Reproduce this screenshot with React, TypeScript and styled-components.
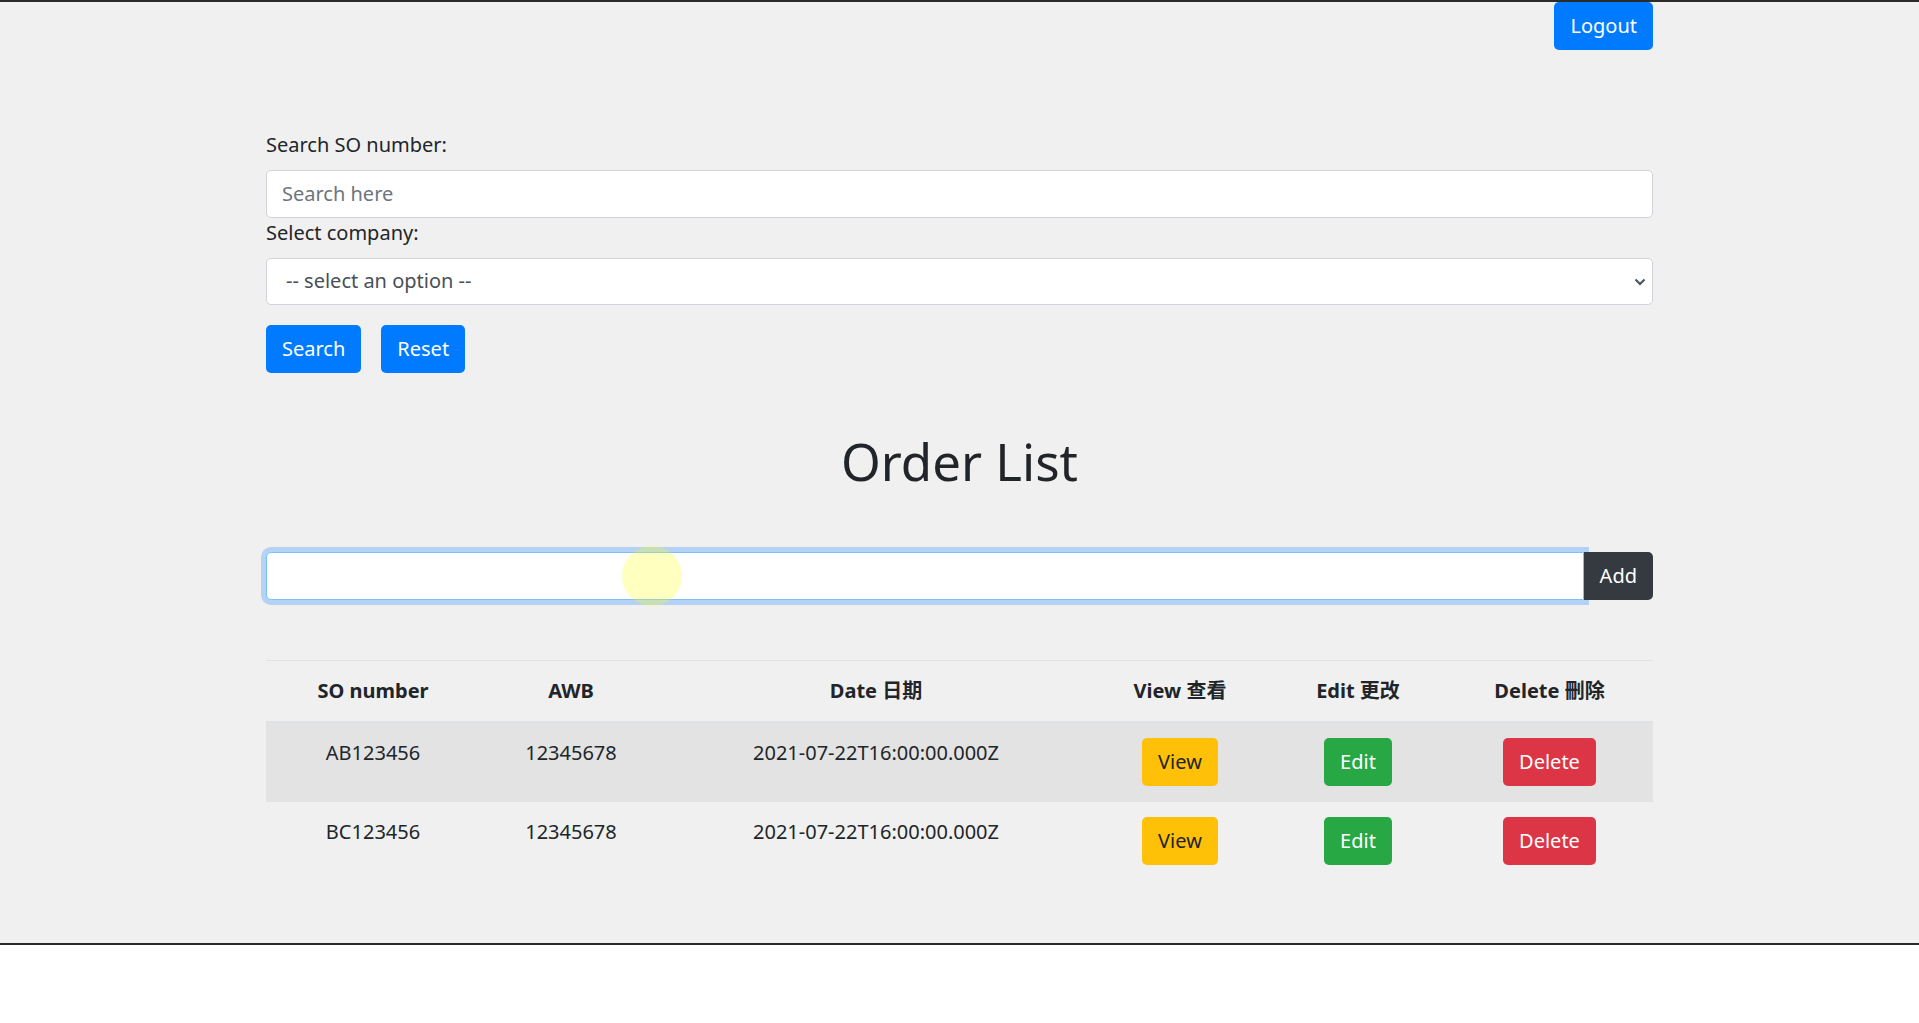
import React from 'react';
import styled, { createGlobalStyle } from 'styled-components';

const GlobalStyle = createGlobalStyle`
  html, body {
    margin: 0;
    padding: 0;
    background: #ffffff;
  }
  body {
    font-family: "Noto Sans", "Noto Sans CJK TC", sans-serif;
    font-size: 20px;
    line-height: 30px;
    color: #212529;
  }
  * {
    box-sizing: border-box;
  }
`;

const Screen = styled.div`
  height: 945px;
  background: #f0f0f0;
  border-top: 2px solid #2b2b2b;
  border-bottom: 2px solid #2b2b2b;
`;

const Container = styled.div`
  width: 1387px;
  margin: 0 auto;
`;

const TopBar = styled.div`
  display: flex;
  justify-content: flex-end;
`;

const Button = styled.button<{ $variant: 'primary' | 'warning' | 'success' | 'danger' | 'dark' }>`
  font-family: inherit;
  font-size: 20px;
  line-height: 30px;
  padding: 8px 15px;
  border: 1px solid transparent;
  border-radius: 5px;
  cursor: pointer;
  color: ${(p) => (p.$variant === 'warning' ? '#212529' : '#ffffff')};
  background: ${(p) =>
    ({
      primary: '#007bff',
      warning: '#ffc107',
      success: '#28a745',
      danger: '#dc3545',
      dark: '#343a40',
    })[p.$variant]};
`;

const Form = styled.form`
  margin-top: 80px;
  display: flex;
  flex-direction: column;
`;

const Label = styled.label`
  display: block;
  margin-bottom: 10px;
`;

const TextInput = styled.input<{ $focused?: boolean }>`
  display: block;
  width: 100%;
  height: 47.5px;
  padding: 7.5px 15px;
  font-family: inherit;
  font-size: 20px;
  line-height: 30px;
  color: #495057;
  background: #ffffff;
  border: 1px solid ${(p) => (p.$focused ? '#80bdff' : '#ced4da')};
  border-radius: 5px;
  box-shadow: ${(p) => (p.$focused ? '0 0 0 5px rgba(0, 123, 255, 0.25)' : 'none')};
  outline: none;
  &::placeholder {
    color: #6c757d;
  }
`;

const SelectWrap = styled.div`
  position: relative;
`;

const Select = styled.select`
  display: block;
  width: 100%;
  height: 47.5px;
  padding: 7.5px 15px 7.5px 19px;
  font-family: inherit;
  font-size: 20px;
  line-height: 30px;
  color: #495057;
  background: #ffffff;
  border: 1px solid #ced4da;
  border-radius: 5px;
  appearance: none;
  outline: none;
`;

const Chevron = styled.svg`
  position: absolute;
  right: 7px;
  top: 20px;
  pointer-events: none;
`;

const ButtonRow = styled.div`
  display: flex;
  gap: 20px;
  margin-top: 20px;
`;

const Title = styled.h1`
  margin: 56px 0 0;
  text-align: center;
  font-size: 51px;
  line-height: 65px;
  font-weight: 400;
  color: #212529;
`;

const InputGroup = styled.div`
  position: relative;
  display: flex;
  margin-top: 58px;
  ${TextInput} {
    flex: 1;
    border-radius: 5px 0 0 5px;
  }
  ${Button} {
    border-radius: 0 5px 5px 0;
  }
`;

const CursorDot = styled.span`
  position: absolute;
  left: 356px;
  top: -6px;
  width: 60px;
  height: 60px;
  border-radius: 50%;
  background: rgba(255, 255, 0, 0.25);
  pointer-events: none;
`;

const Table = styled.table`
  width: 100%;
  margin-top: 60px;
  border-collapse: collapse;
  table-layout: fixed;
`;

const Th = styled.th<{ $w: number }>`
  width: ${(p) => p.$w}px;
  padding: 15px;
  text-align: center;
  vertical-align: bottom;
  font-weight: 700;
  border-top: 1px solid #dee2e6;
  border-bottom: 2px solid #dee2e6;
`;

const Tr = styled.tr<{ $striped: boolean }>`
  background: ${(p) => (p.$striped ? 'rgba(0, 0, 0, 0.05)' : 'transparent')};
`;

const Td = styled.td`
  padding: 15px;
  text-align: center;
  vertical-align: top;
  border-top: 1px solid #dee2e6;
`;

const columns = [
  { label: 'SO number', w: 214 },
  { label: 'AWB', w: 182 },
  { label: 'Date 日期', w: 428 },
  { label: 'View 查看', w: 180 },
  { label: 'Edit 更改', w: 176 },
  { label: 'Delete 刪除', w: 207 },
];

const orders = [
  { so: 'AB123456', awb: '12345678', date: '2021-07-22T16:00:00.000Z' },
  { so: 'BC123456', awb: '12345678', date: '2021-07-22T16:00:00.000Z' },
];

export default function App() {
  return (
    <>
      <GlobalStyle />
      <Screen>
        <Container>
          <TopBar>
            <Button $variant="primary">Logout</Button>
          </TopBar>

          <Form onSubmit={(e) => e.preventDefault()}>
            <Label htmlFor="so">Search SO number:</Label>
            <TextInput id="so" placeholder="Search here" />
            <Label htmlFor="company">Select company:</Label>
            <SelectWrap>
              <Select id="company" defaultValue="">
                <option value="">-- select an option --</option>
              </Select>
              <Chevron width="12" height="8" viewBox="0 0 12 8">
                <path d="M1.5 1.5 L6 6 L10.5 1.5" fill="none" stroke="#495057" strokeWidth="2" />
              </Chevron>
            </SelectWrap>
            <ButtonRow>
              <Button $variant="primary" type="submit">Search</Button>
              <Button $variant="primary" type="button">Reset</Button>
            </ButtonRow>
          </Form>

          <Title>Order List</Title>

          <InputGroup>
            <TextInput $focused />
            <Button $variant="dark">Add</Button>
            <CursorDot />
          </InputGroup>

          <Table>
            <thead>
              <tr>
                {columns.map((c) => (
                  <Th key={c.label} $w={c.w}>{c.label}</Th>
                ))}
              </tr>
            </thead>
            <tbody>
              {orders.map((o, i) => (
                <Tr key={o.so} $striped={i % 2 === 0}>
                  <Td>{o.so}</Td>
                  <Td>{o.awb}</Td>
                  <Td>{o.date}</Td>
                  <Td><Button $variant="warning">View</Button></Td>
                  <Td><Button $variant="success">Edit</Button></Td>
                  <Td><Button $variant="danger">Delete</Button></Td>
                </Tr>
              ))}
            </tbody>
          </Table>
        </Container>
      </Screen>
    </>
  );
}
